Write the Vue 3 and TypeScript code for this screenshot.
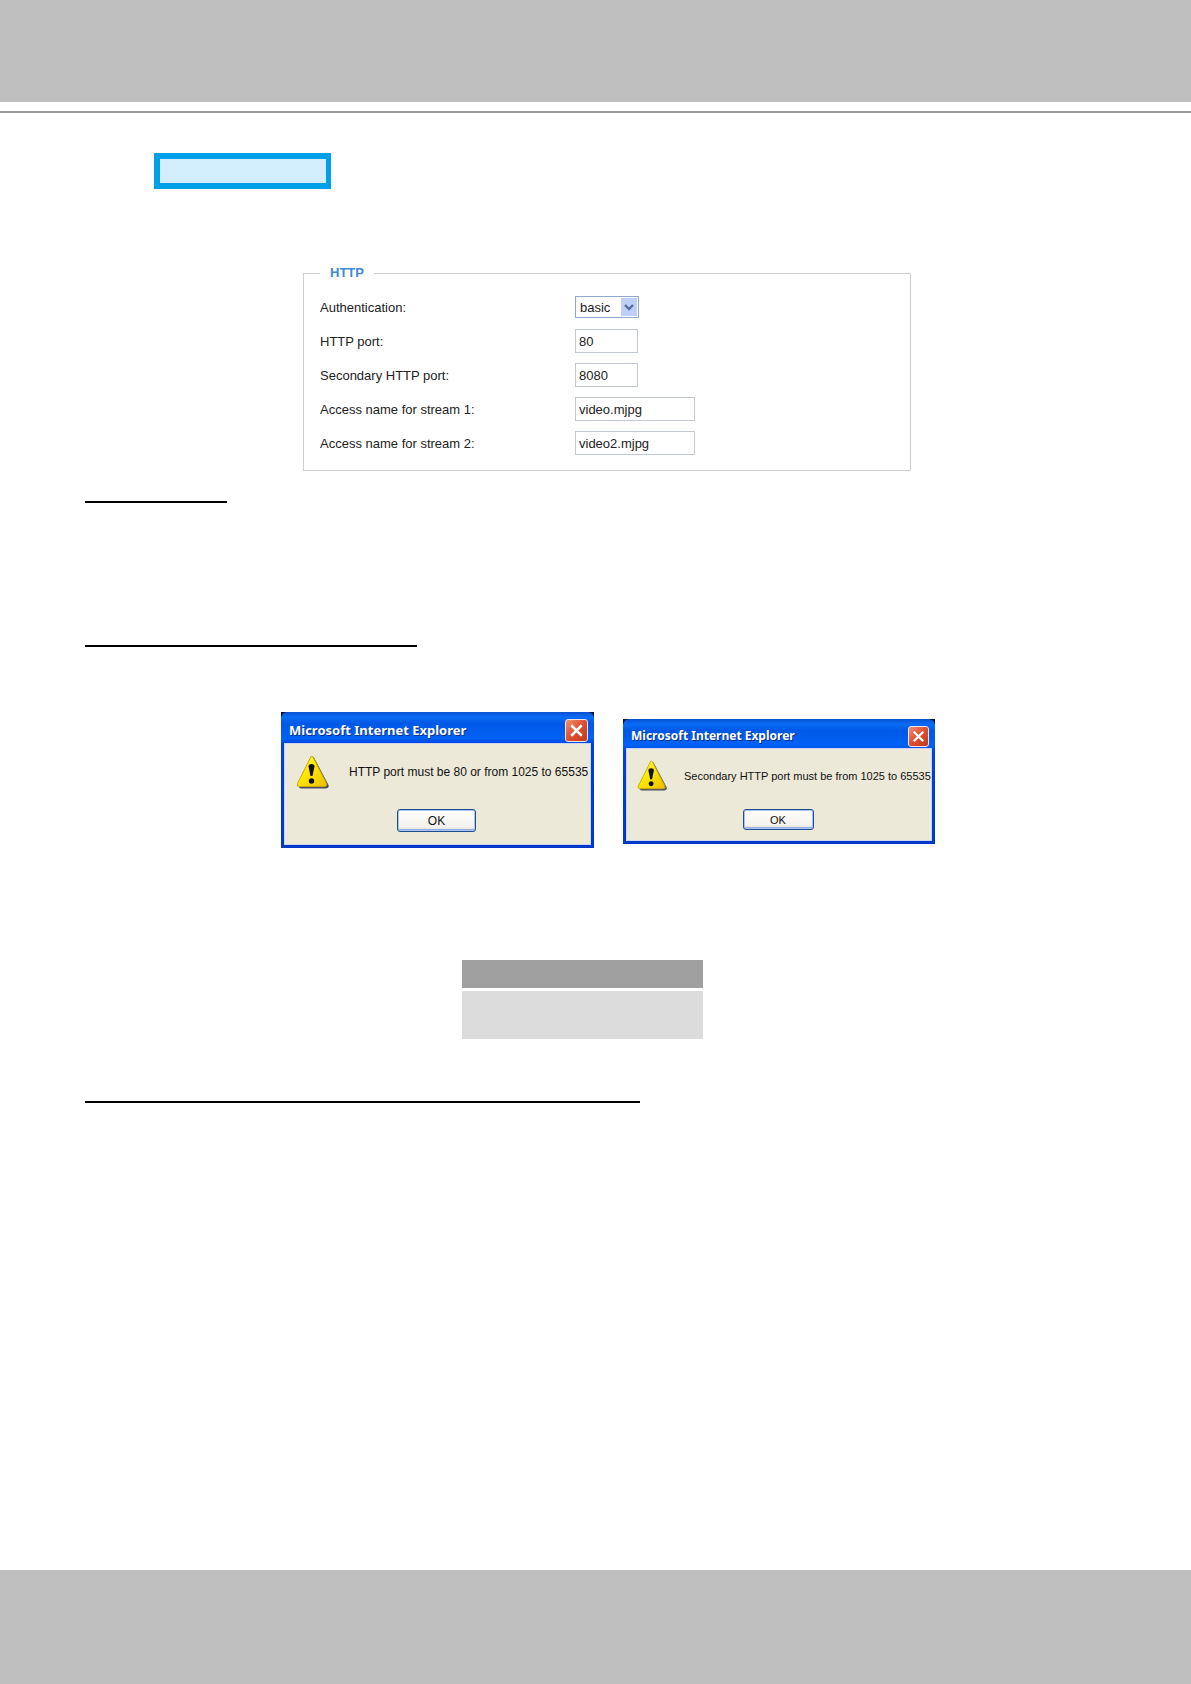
<script setup lang="ts">
import { ref } from 'vue'

interface TextRow {
  id: string
  label: string
  value: string
  wide: boolean
}

interface AlertBox {
  id: string
  title: string
  message: string
  small: boolean
}

const authentication = ref('basic')

const rows = ref<TextRow[]>([
  { id: 'http-port', label: 'HTTP port:', value: '80', wide: false },
  { id: 'secondary-port', label: 'Secondary HTTP port:', value: '8080', wide: false },
  { id: 'stream-1', label: 'Access name for stream 1:', value: 'video.mjpg', wide: true },
  { id: 'stream-2', label: 'Access name for stream 2:', value: 'video2.mjpg', wide: true },
])

const alerts: AlertBox[] = [
  {
    id: 'alert-http',
    title: 'Microsoft Internet Explorer',
    message: 'HTTP port must be 80 or from 1025 to 65535',
    small: false,
  },
  {
    id: 'alert-secondary',
    title: 'Microsoft Internet Explorer',
    message: 'Secondary HTTP port must be from 1025 to 65535',
    small: true,
  },
]
</script>

<template>
  <div class="page">
    <header class="band band-top"></header>
    <div class="header-rule"></div>

    <main class="content">
      <div class="badge"></div>

      <form class="settings" @submit.prevent>
        <fieldset class="group">
          <legend>HTTP</legend>
          <div class="row">
            <label for="authentication">Authentication:</label>
            <span class="select-wrap">
              <select id="authentication" v-model="authentication">
                <option value="basic">basic</option>
                <option value="digest">digest</option>
              </select>
              <span class="select-arrow">
                <svg width="10" height="7" viewBox="0 0 10 7" aria-hidden="true">
                  <path d="M1 1 L5 5 L9 1" fill="none" stroke="#5a6e94" stroke-width="2.4" />
                </svg>
              </span>
            </span>
          </div>
          <div v-for="row in rows" :key="row.id" class="row">
            <label :for="row.id">{{ row.label }}</label>
            <input :id="row.id" v-model="row.value" type="text" :class="{ wide: row.wide }" />
          </div>
        </fieldset>
      </form>

      <section class="section section-first">
        <div class="underline underline-short"></div>
      </section>

      <section class="section section-ports">
        <div class="underline underline-medium"></div>
        <div class="alerts">
          <div
            v-for="alert in alerts"
            :key="alert.id"
            class="alert"
            :class="{ small: alert.small }"
            role="alertdialog"
            :aria-labelledby="alert.id"
          >
            <div class="titlebar">
              <span :id="alert.id" class="title">{{ alert.title }}</span>
              <button type="button" class="close" aria-label="Close">
                <svg viewBox="0 0 22 22" aria-hidden="true">
                  <path d="M5.500 5.500 L16.500 16.500 M16.500 5.500 L5.500 16.500" stroke="#fff" stroke-width="2.6" fill="none" />
                </svg>
              </button>
            </div>
            <div class="alert-body">
              <div class="message">
                <svg class="warning" viewBox="0 0 34 34" aria-hidden="true">
                  <defs>
                    <linearGradient :id="alert.id + '-fill'" x1="0" y1="0" x2="1" y2="1">
                      <stop offset="0" stop-color="#fff36b" />
                      <stop offset="0.45" stop-color="#fde800" />
                      <stop offset="1" stop-color="#eebd00" />
                    </linearGradient>
                  </defs>
                  <path
                    d="M17.5 2.5 L32 30 Q33 33 30 33 H5 Q3 33 3.5 31 Z"
                    fill="#4a4f66"
                    stroke="#4a4f66"
                    stroke-width="1"
                    stroke-linejoin="round"
                  />
                  <path
                    d="M15 1.5 Q16 .5 17 2 L30.500 28.500 Q31.500 31.500 28.500 31.500 H3 Q.5 31.500 1.500 28.500 Z"
                    :fill="`url(#${alert.id}-fill)`"
                    stroke="#c9a800"
                    stroke-width="1"
                    stroke-linejoin="round"
                  />
                  <path d="M12.500 11.500 Q12.500 9 15.500 9 Q18.500 9 18.500 11.500 L16.500 21 H14.500 Z" fill="#111" />
                  <circle cx="15.500" cy="26" r="2.700" fill="#111" />
                </svg>
                <p>{{ alert.message }}</p>
              </div>
              <button type="button" class="ok">OK</button>
            </div>
          </div>
        </div>

        <div class="swatch">
          <div class="swatch-head"></div>
          <div class="swatch-body"></div>
        </div>
      </section>

      <section class="section section-streams">
        <div class="underline underline-long"></div>
      </section>
    </main>

    <footer class="band band-bottom"></footer>
  </div>
</template>

<style>
body {
  background: #fff;
}
</style>

<style scoped>
.page {
  display: flex;
  flex-direction: column;
  min-height: 100vh;
  font-family: "Liberation Sans", Arial, sans-serif;
  font-size: 13px;
  color: #222;
}

.band {
  background: #bfbfbf;
}

.band-top {
  height: 102px;
}

.band-bottom {
  height: 114px;
  margin-top: auto;
}

.header-rule {
  height: 2px;
  margin-top: 9px;
  background: #999;
}

.content {
  padding: 40px 85px;
}

.badge {
  box-sizing: border-box;
  width: 177px;
  height: 36px;
  margin-left: 69px;
  border: 6px solid #00a0e9;
  border-right-width: 5px;
  background: #d2edfb;
}

.settings {
  margin: 75px 195px 0 218px;
}

.group {
  min-width: 0;
  margin: 0;
  padding: 13px 16px 15px;
  border: 1px solid #cdcdc9;
  display: flex;
  flex-direction: column;
  gap: 10px;
}

legend {
  padding: 0 10px;
  line-height: 18px;
  font-size: 13px;
  font-weight: 700;
  color: #3d8ad3;
}

.row {
  display: flex;
  align-items: center;
  height: 24px;
}

.row label {
  flex: 0 0 255px;
}

.row input,
.row select {
  box-sizing: border-box;
  width: 63px;
  height: 24px;
  margin: 0;
  padding: 0 3px;
  border: 1px solid #c3c9d0;
  border-radius: 0;
  background: #fff;
  font: inherit;
  color: #222;
}

.row input.wide {
  width: 120px;
}

.select-wrap {
  position: relative;
  display: flex;
}

.row select {
  appearance: none;
  width: 64px;
  height: 22px;
  padding: 0 4px;
  border-color: #8ea9cd;
}

.select-arrow {
  position: absolute;
  top: 2px;
  right: 2px;
  bottom: 2px;
  width: 16px;
  display: flex;
  align-items: center;
  justify-content: center;
  background: #bfd0f8;
  pointer-events: none;
}

.underline {
  height: 2px;
  background: #000;
}

.underline-short {
  width: 142px;
}

.underline-medium {
  width: 332px;
}

.underline-long {
  width: 555px;
}

.section-first {
  margin-top: 30px;
}

.section-ports {
  margin-top: 142px;
}

.section-streams {
  margin-top: 62px;
}

.alerts {
  display: flex;
  justify-content: center;
  align-items: center;
  gap: 29px;
  margin-top: 65px;
  padding-left: 25px;
}

.alert {
  box-sizing: border-box;
  display: flex;
  flex-direction: column;
  width: 313px;
  height: 136px;
  padding: 0 3px 3px;
  background:
    radial-gradient(circle at 100% 100%, transparent 4px, #0a1030 5px) 0 0 / 5px 5px no-repeat,
    radial-gradient(circle at 0 100%, transparent 4px, #0a1030 5px) 100% 0 / 5px 5px no-repeat,
    linear-gradient(#0a50d0, #0a6cf5 5px, #0058e6 12px, #0062f6 26px, #0040dc 32px, #0038c8);
  font-size: 12px;
  color: #111;
}

.titlebar {
  display: flex;
  align-items: center;
  justify-content: space-between;
  height: 31px;
  padding: 5px 3px 0 5px;
  box-sizing: border-box;
}

.title {
  font-family: "Noto Sans", sans-serif;
  font-size: 13px;
  font-weight: 700;
  line-height: 20px;
  color: #fff;
  text-shadow: 1px 1px 0 #0a2f8c;
  white-space: nowrap;
}

.close {
  width: 23px;
  height: 23px;
  padding: 0;
  border: 1px solid #f0e4e4;
  border-radius: 3px;
  background: linear-gradient(135deg, #ee9078, #dc4f2e 50%, #c23a1c);
}

.close svg {
  display: block;
  width: 100%;
  height: 100%;
}

.alert-body {
  flex: 1;
  display: flex;
  flex-direction: column;
  align-items: center;
  justify-content: space-between;
  padding: 12px 2px 13px 0;
  background: #ece9d8;
  box-shadow: inset 0 0 0 1px #c8d8f4;
}

.message {
  display: flex;
  align-items: center;
  align-self: stretch;
  gap: 19px;
  padding-left: 12px;
}

.message p {
  margin: 0;
  line-height: 16px;
  white-space: nowrap;
}

.warning {
  flex: none;
  width: 34px;
  height: 34px;
}

.ok {
  width: 79px;
  height: 23px;
  padding: 0;
  border: 1px solid #1d4f8f;
  border-radius: 3px;
  background: linear-gradient(#fff, #f3f2ec 80%, #dcd8cc);
  box-shadow: inset 0 0 0 1px #a9c3ee, inset 0 -2px 0 #8fb0e8;
  font: inherit;
  color: #111;
}

.alert.small {
  width: 312px;
  height: 125px;
  margin-top: 3px;
  font-size: 11px;
}

.small .titlebar {
  height: 29px;
}

.small .title {
  font-size: 12px;
}

.small .close {
  width: 21px;
  height: 21px;
}

.small .alert-body {
  padding: 12px 2px 11px 0;
}

.small .message {
  gap: 16px;
  padding-left: 11px;
}

.small .warning {
  width: 31px;
  height: 31px;
}

.small .ok {
  width: 71px;
  height: 21px;
}

.swatch {
  display: flex;
  flex-direction: column;
  align-items: center;
  gap: 3px;
  margin-top: 112px;
  padding-right: 26px;
}

.swatch-head,
.swatch-body {
  width: 241px;
}

.swatch-head {
  height: 28px;
  background: #9f9f9f;
}

.swatch-body {
  height: 48px;
  background: #dcdcdc;
}
</style>
